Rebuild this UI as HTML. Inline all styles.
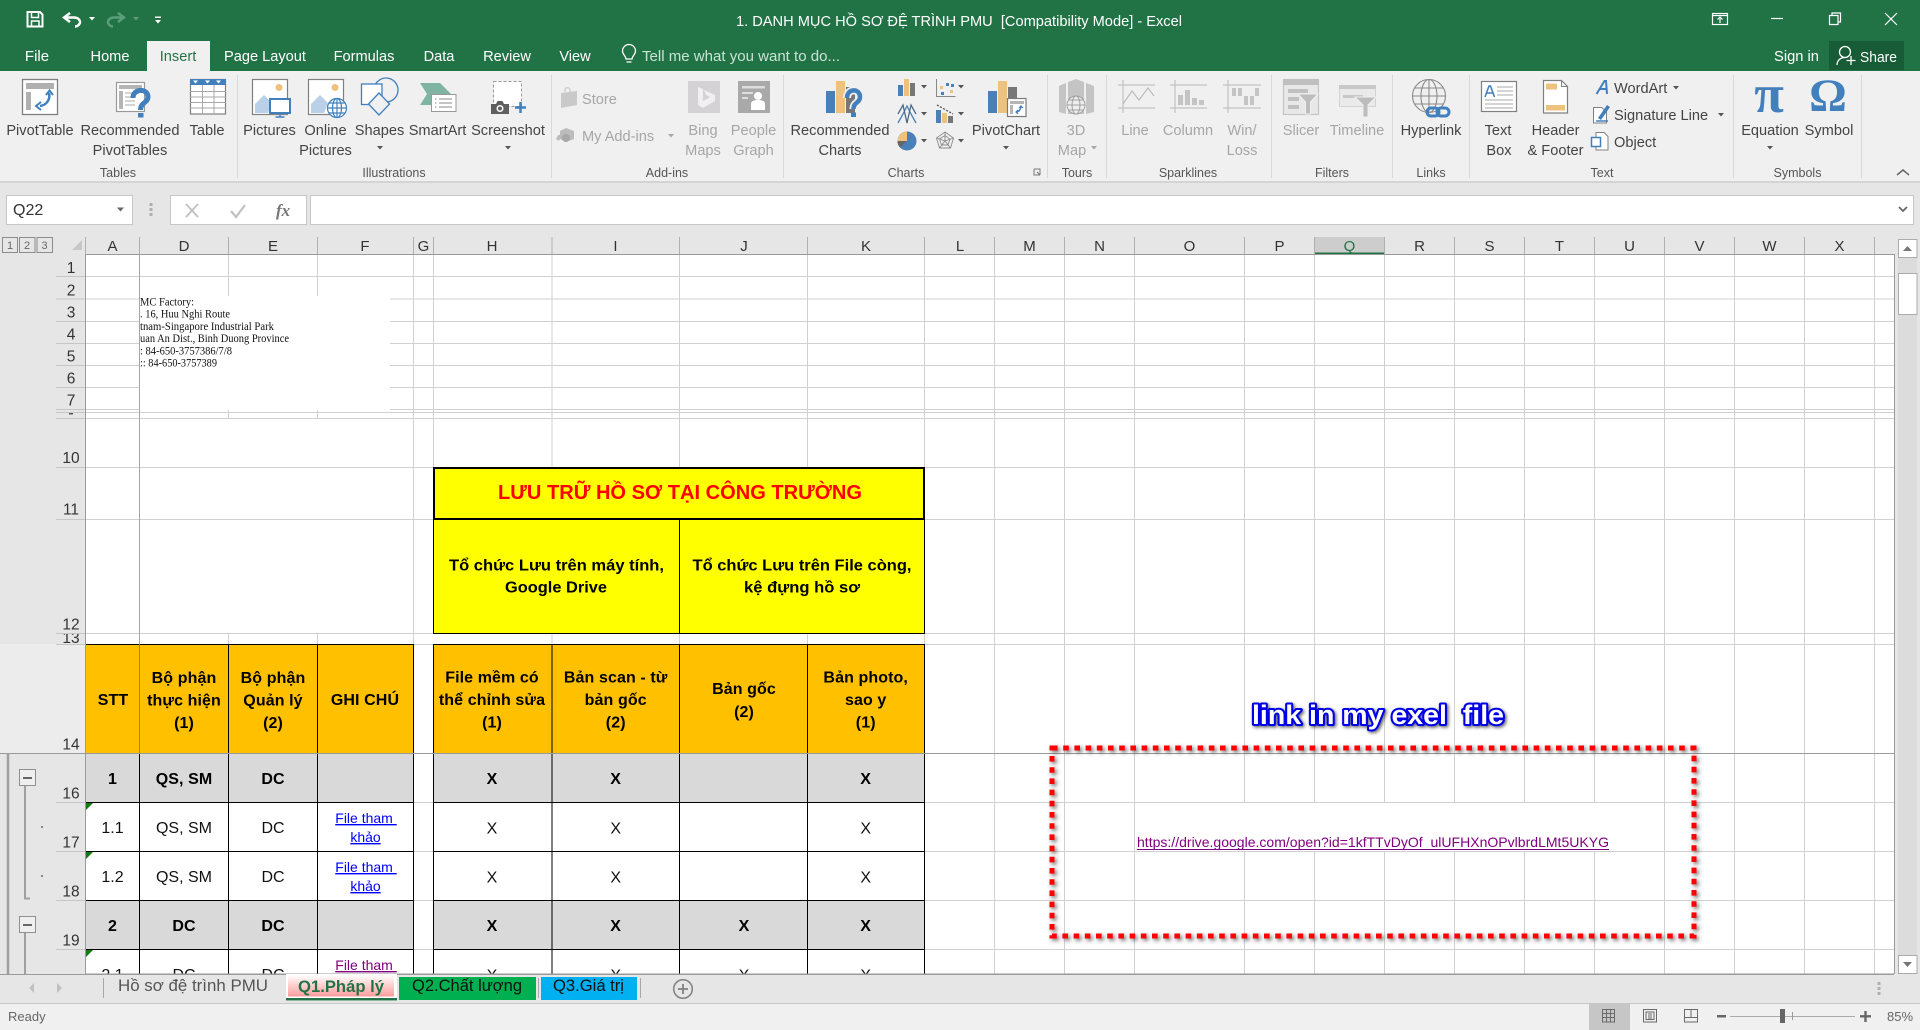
<!DOCTYPE html>
<html lang="vi"><head><meta charset="utf-8"><title>1. DANH MỤC HỒ SƠ ĐỆ TRÌNH PMU - Excel</title>
<style>
html,body{margin:0;padding:0;background:#fff;overflow:hidden}
svg{display:block;font-family:"Liberation Sans","Noto Sans CJK SC",sans-serif}
.tb{font-size:15px;fill:#fff}
.r{font-size:14.6px;fill:#444;text-anchor:middle}
.rl{font-size:14.6px;fill:#444}
.d{font-size:14.6px;fill:#a6a6a6;text-anchor:middle}
.dl{font-size:14.6px;fill:#a6a6a6}
.g{font-size:12.5px;fill:#555;text-anchor:middle}
.c{font-size:15px;fill:#333;text-anchor:middle}
.n{font-size:15.5px;fill:#333;text-anchor:middle}
.h{font-size:16px;font-weight:bold;fill:#000;text-anchor:middle;letter-spacing:.1px}
.t{font-size:16px;fill:#111;text-anchor:middle}
.l{font-size:14px;fill:#0000ff;text-anchor:middle;text-decoration:underline}
.p{font-size:14px;fill:#800080;text-anchor:middle;text-decoration:underline}
.s{font-family:"Liberation Serif",serif;font-size:11.5px;fill:#111}
.gl{stroke:#d0d0d0;stroke-width:1;fill:none}
.bk{stroke:#000;stroke-width:1;fill:none}
.blue{stroke:#4280bd;fill:none}
.gr{stroke:#c2c2c2;fill:none}
</style></head><body>
<svg width="1920" height="1030" viewBox="0 0 1920 1030" xmlns="http://www.w3.org/2000/svg" shape-rendering="auto">
<defs>
<filter id="sh" x="-5%" y="-10%" width="110%" height="120%"><feDropShadow dx="2" dy="2" stdDeviation="2" flood-color="#333" flood-opacity=".75"/></filter>
<filter id="sh2" x="-10%" y="-30%" width="120%" height="160%"><feDropShadow dx="1.5" dy="1.5" stdDeviation="1.6" flood-color="#222" flood-opacity=".7"/></filter>
<linearGradient id="pk" x1="0" y1="0" x2="0" y2="1"><stop offset="0" stop-color="#fff"/><stop offset="1" stop-color="#ff9c9c"/></linearGradient>
<clipPath id="c13"><rect x="56" y="634" width="29" height="10"/></clipPath>
</defs>

<!-- backgrounds -->
<rect width="1920" height="1030" fill="#e6e6e6"/>
<rect width="1920" height="71" fill="#217346"/>
<rect y="71" width="1920" height="111" fill="#f0f0f0"/>
<rect y="181" width="1920" height="2" fill="#d4d4d4"/>
<rect x="147" y="41" width="63" height="31" fill="#f0f0f0"/>
<rect x="1829" y="41" width="75" height="29" fill="#185c37"/>

<!-- quick access -->
<g fill="none" stroke="#fff" stroke-width="2">
<path d="M27.5 12H40l2.5 2.5V26.500H27.500Z"/><path d="M31.500 12v5.500h7V12" stroke-width="1.500"/><path d="M31.500 26.500v-5.500h7.500v5.500" stroke-width="1.500"/>
<path d="M70 13l-6 4.500 6 4.500M65 17.500h9c4 0 6 2.500 6 4.500s-2 4.500-5 4.500" stroke-width="2.400"/>
<path d="M118 13l6 4.500-6 4.500M123 17.500h-9c-4 0-6 2.500-6 4.500s2 4.500 5 4.500" stroke="#5c9e7c" stroke-width="2.400"/>
</g>
<path d="M89 17h6l-3 3.500z" fill="#fff"/><path d="M133 17h6l-3 3.500z" fill="#5c9e7c"/>
<path d="M155 16.500h6v1.500h-6zM155 20h6l-3 3.500z" fill="#fff"/>

<text x="736" y="26" class="tb" style="font-size:14.6px" textLength="446" lengthAdjust="spacingAndGlyphs">1. DANH MỤC HỒ SƠ ĐỆ TRÌNH PMU &#160;[Compatibility Mode] - Excel</text>

<!-- window buttons -->
<g fill="none" stroke="#fff" stroke-width="1.200">
<rect x="1712.500" y="13.500" width="15" height="11"/><path d="M1712.500 15.500h15M1720 23v-6M1717.500 19.500l2.500-2.500 2.500 2.500"/>
<path d="M1771 18.500h12"/>
<path d="M1829.500 15.500h8.500v9h-8.500zM1832 15.500v-2.500h8.500v9h-2.500"/>
<path d="M1885 13l12 12M1897 13l-12 12"/>
</g>

<!-- tabs -->
<g class="tb">
<text x="37" y="61" text-anchor="middle">File</text>
<text x="110" y="61" text-anchor="middle" style="font-size:14.6px">Home</text>
<text x="178" y="61" text-anchor="middle" style="fill:#217346;font-size:14.6px">Insert</text>
<text x="265" y="61" text-anchor="middle" style="font-size:14.6px">Page Layout</text>
<text x="364" y="61" text-anchor="middle" style="font-size:14.6px">Formulas</text>
<text x="439" y="61" text-anchor="middle" style="font-size:14.6px">Data</text>
<text x="507" y="61" text-anchor="middle" style="font-size:14.6px">Review</text>
<text x="575" y="61" text-anchor="middle" style="font-size:14.6px">View</text>
<text x="642" y="61" style="fill:#c9e2d4;font-size:14.400px" textLength="198" lengthAdjust="spacingAndGlyphs">Tell me what you want to do...</text>
<text x="1774" y="61" textLength="45" lengthAdjust="spacingAndGlyphs">Sign in</text>
<text x="1860" y="62" textLength="37" lengthAdjust="spacingAndGlyphs">Share</text>
</g>
<g fill="none" stroke="#fff" stroke-width="1.300">
<path d="M626 59c0-3-3.500-4.500-3.500-8a6.500 6.500 0 0 1 13 0c0 3.500-3.500 5-3.500 8zM626.500 62h5"/>
<circle cx="1845" cy="52" r="5.500"/><path d="M1837 65c0-5 4-7.500 8-7.500"/><path d="M1851 56v9M1846.500 60.500h9"/>
</g>

<!-- ribbon separators -->
<path d="M237.500 75v103M551.500 75v103M783.500 75v103M1047.500 75v103M1106.500 75v103M1271.500 75v103M1392.500 75v103M1469.500 75v103M1733.500 75v103M1861.500 75v103" stroke="#d8d8d8" fill="none"/>

<!-- ribbon labels -->
<text x="40" y="135" class="r">PivotTable</text>
<text x="130" y="135" class="r">Recommended</text><text x="130" y="155" class="r">PivotTables</text>
<text x="207" y="135" class="r">Table</text>
<text x="269.500" y="135" class="r">Pictures</text>
<text x="325.500" y="135" class="r">Online</text><text x="325.500" y="155" class="r">Pictures</text>
<text x="379.500" y="135" class="r">Shapes</text>
<text x="437.500" y="135" class="r">SmartArt</text>
<text x="508" y="135" class="r">Screenshot</text>
<text x="118" y="177" class="g">Tables</text><text x="394" y="177" class="g">Illustrations</text>
<text x="582" y="104" class="dl">Store</text><text x="582" y="141" class="dl">My Add-ins</text>
<text x="703" y="135" class="d">Bing</text><text x="703" y="155" class="d">Maps</text>
<text x="753.500" y="135" class="d">People</text><text x="753.500" y="155" class="d">Graph</text>
<text x="667" y="177" class="g">Add-ins</text>
<text x="840" y="135" class="r">Recommended</text><text x="840" y="155" class="r">Charts</text>
<text x="1006" y="135" class="r">PivotChart</text>
<text x="906" y="177" class="g">Charts</text>
<text x="1076" y="135" class="d">3D</text><text x="1072" y="155" class="d">Map</text>
<text x="1077" y="177" class="g">Tours</text>
<text x="1135" y="135" class="d">Line</text><text x="1188" y="135" class="d">Column</text>
<text x="1242" y="135" class="d">Win/</text><text x="1242" y="155" class="d">Loss</text>
<text x="1188" y="177" class="g">Sparklines</text>
<text x="1301" y="135" class="d">Slicer</text><text x="1357" y="135" class="d">Timeline</text>
<text x="1332" y="177" class="g">Filters</text>
<text x="1431" y="135" class="r">Hyperlink</text><text x="1431" y="177" class="g">Links</text>
<text x="1498" y="135" class="r">Text</text><text x="1499" y="155" class="r">Box</text>
<text x="1555.500" y="135" class="r">Header</text><text x="1555.500" y="155" class="r">&amp; Footer</text>
<text x="1614" y="93" class="rl">WordArt</text><text x="1614" y="120" class="rl">Signature Line</text><text x="1614" y="147" class="rl">Object</text>
<text x="1602" y="177" class="g">Text</text>
<text x="1770" y="135" class="r">Equation</text><text x="1829" y="135" class="r">Symbol</text>
<text x="1797.500" y="177" class="g">Symbols</text>

<!-- dropdown arrows -->
<g fill="#555">
<path d="M377 146h6l-3 3.500zM505 146h6l-3 3.500zM1003 146h6l-3 3.500zM921 85h6l-3 3.500zM958 85h6l-3 3.500zM921 112h6l-3 3.500zM958 112h6l-3 3.500zM921 139h6l-3 3.500zM958 139h6l-3 3.500zM1673 86h6l-3 3.500zM1718 113h6l-3 3.500zM1767 146h6l-3 3.500z"/>
</g>
<path d="M668 134h6l-3 3.500zM1091 146h6l-3 3.500z" fill="#a6a6a6"/>
<path d="M1897 175l6-5 6 5" fill="none" stroke="#666" stroke-width="1.500"/>
<path d="M1034 169h6v6M1037 172l3 3M1034 169v6h6" fill="none" stroke="#777" stroke-width="1"/>

<!-- PivotTable -->
<rect x="22.500" y="79.500" width="35" height="35" fill="#fff" stroke="#808080" stroke-width="1.300"/>
<path d="M26 83h28v6H26zM26 92h5v18h-5z" fill="#b0b0b0"/>
<path d="M49 93c1.500 6-2 12-9 13" class="blue" stroke-width="2.500"/><path d="M46 95l3.500-4.500 3.500 4.500M41 102l-5 4 5 4" class="blue" stroke-width="2"/>
<!-- Recommended PivotTables -->
<rect x="116.500" y="82.500" width="28" height="29" fill="#fff" stroke="#999" stroke-width="1.200"/>
<path d="M119 85h23v4h-23zM119 91h4v18h-4z" fill="#b5b5b5"/><path d="M125 93h14M125 97h10M125 101h10M125 105h10" stroke="#c5c5c5" stroke-width="1.500"/>
<path d="M133 98c0-10 15-10 15-1 0 6-7.500 5-7.500 13" fill="none" stroke="#4280bd" stroke-width="5"/><rect x="138" y="113" width="5.500" height="4.500" fill="#4280bd"/>
<!-- Table -->
<rect x="190.500" y="79.500" width="35" height="34.500" fill="#fff" stroke="#808080" stroke-width="1.200"/>
<rect x="190" y="79" width="36" height="6" fill="#4280bd"/>
<path d="M193 80.500h5l-2.500 3zM205 80.500h5l-2.500 3zM216 80.500h5l-2.500 3z" fill="#fff"/>
<path d="M190 91.500h36M190 97h36M190 102.500h36M190 108h36M202.500 85v29M214 85v29" stroke="#a8a8a8"/>
<!-- Pictures -->
<rect x="252.500" y="79.500" width="35" height="35" fill="#fff" stroke="#808080" stroke-width="1.200"/>
<circle cx="279" cy="87.500" r="3.500" fill="#eec27a"/><path d="M255 113v-9l9-9 8 8-4 10z" fill="#b9d0e8"/>
<rect x="270" y="99" width="20" height="14" fill="#fff" stroke="#4280bd" stroke-width="2"/><path d="M280 113v4M275.500 117h9" stroke="#4280bd" stroke-width="1.500"/>
<!-- Online pictures -->
<rect x="308.500" y="79.500" width="35" height="35" fill="#fff" stroke="#808080" stroke-width="1.200"/>
<circle cx="335" cy="87.500" r="3.500" fill="#eec27a"/><path d="M311 113v-9l9-9 8 8-4 10z" fill="#b9d0e8"/>
<g fill="#fff" stroke="#4280bd" stroke-width="1.200"><circle cx="337" cy="108" r="9.500"/><ellipse cx="337" cy="108" rx="4.500" ry="9.500"/><path d="M327.500 108h19M329 103h16M329 113h16M337 98.500v19"/></g>
<!-- Shapes -->
<g stroke="#4280bd" stroke-width="1.300" fill="#f0f0f0"><circle cx="386" cy="90" r="12"/><rect x="361.500" y="84" width="20.500" height="20.500" fill="#fff"/><path d="M379 93l10.500 11-10.500 11-10.500-11z"/></g>
<!-- SmartArt -->
<path d="M420 83h20l11 11-11 11h-20l7-11z" fill="#7fb4a2"/>
<rect x="431.500" y="94.500" width="24.500" height="17" fill="#fff" stroke="#999"/><path d="M435 99h1.500M439 99h13M435 103h1.500M439 103h13M435 107h1.500M439 107h13" stroke="#888"/>
<!-- Screenshot -->
<rect x="493.500" y="81.500" width="28" height="25" fill="#fff" stroke="#9a9a9a" stroke-dasharray="3 2"/>
<path d="M491 104h5l1.500-3h5l1.500 3h5v10h-18z" fill="#5f5f5f"/><circle cx="500" cy="108.500" r="3.500" fill="#fff"/><circle cx="500" cy="108.500" r="2" fill="#5f5f5f"/>
<path d="M520.500 102v11M515 107.500h11" stroke="#4280bd" stroke-width="2.500"/>
<!-- Store / Add-ins -->
<path d="M561 93l16-2v14l-16 3z" fill="#c9c9c9"/><path d="M565 92v-2c0-3 5-3 5 0v2" stroke="#c9c9c9" fill="none" stroke-width="1.300"/>
<path d="M566 128l8 3v8l-8 3-6-3-1 2-3-2 2-4 2 0v-4z" fill="#bcbcbc"/><circle cx="566" cy="138" r="4" fill="#a8a8a8"/>
<!-- Bing / People -->
<rect x="688" y="81" width="32" height="32" fill="#d4d2d4"/><path d="M698 87l5 2v12l7-4-4-2-2-5 11 5v6l-12 7-5-3z" fill="#f0f0f0"/>
<rect x="738" y="81" width="32" height="32" fill="#a9a9a9"/><path d="M742 86h23v2.500h-23zM742 92h11v2h-11zM742 97h6v2h-6z" fill="#ddd"/><circle cx="758" cy="96" r="4" fill="#fff"/><path d="M751 110v-6c0-3 3-4 7-4s7 1 7 4v6z" fill="#fff"/>
<!-- Recommended Charts -->
<rect x="826" y="91" width="9" height="22" fill="#4a80b8"/><rect x="836" y="81" width="9" height="32" fill="#edc27f"/><rect x="846" y="87" width="9" height="26" fill="#777"/>
<path d="M847 98c0-10 13-10 13-1 0 6-6.500 5-6.500 12" fill="none" stroke="#f0f0f0" stroke-width="8"/>
<path d="M847 98c0-10 13-10 13-1 0 6-6.500 5-6.500 12" fill="none" stroke="#4280bd" stroke-width="4.500"/><rect x="851" y="112.500" width="5" height="4.500" fill="#4280bd"/>
<!-- small charts -->
<rect x="898" y="85" width="5" height="11" fill="#4a80b8"/><rect x="904" y="79" width="5" height="17" fill="#edc27f"/><rect x="910" y="83" width="5" height="13" fill="#777"/>
<path d="M936.500 79v17.500h19" stroke="#888" fill="none"/><path d="M940 86h3v3h-3zM950 90h3v3h-3z" fill="#edc27f"/><path d="M946 83h3v3h-3zM941 92h3v3h-3zM951 84h3v3h-3z" fill="#4a80b8"/>
<path d="M898 114l5-9 4 18 4-18 5 9M898 123l5-9 4-8 4 8 5 9" fill="none" stroke="#4a80b8" stroke-width="1.300"/><path d="M898 114l5-9 4 18 4-18 5 9" fill="none" stroke="#555" stroke-width=".6"/>
<rect x="936" y="110" width="5" height="13" fill="#4a80b8"/><rect x="942" y="113" width="5" height="10" fill="#edc27f"/><rect x="948" y="116" width="5" height="7" fill="#777"/><path d="M937 105l16 9" stroke="#555" stroke-width="1.300" stroke-dasharray="2 1.500"/>
<circle cx="907" cy="141" r="9.500" fill="#4a80b8"/><path d="M907 141v-9.500a9.500 9.500 0 0 0-9.500 9.500z" fill="#edc27f"/><path d="M907 141h-9.500a9.500 9.500 0 0 0 2.500 6.500z" fill="#666"/>
<g fill="none" stroke="#8a8a8a" stroke-width=".9"><path d="M945 132l8.500 6-3 10h-11l-3-10zM945 135.500l5 3.500-2 6h-6.500l-2-6zM945 132v9M936.500 138l8.500 3 8.500-3M939.500 148l5.500-7 5.500 7"/></g>
<!-- PivotChart -->
<rect x="988" y="91" width="9" height="22" fill="#4a80b8"/><rect x="998" y="81" width="9" height="32" fill="#edc27f"/><rect x="1008" y="87" width="9" height="12" fill="#777"/>
<rect x="1007.500" y="98.500" width="18.500" height="18" fill="#fff" stroke="#7a7a7a" stroke-width="1.200"/><path d="M1010 101h14v3h-14zM1010 105h3v9h-3z" fill="#b5b5b5"/><path d="M1021 106c0 3-2 6-5 6" class="blue" stroke-width="1.500"/><path d="M1019 108l2-2 2 2M1018 110l-2 2 2 2" class="blue" stroke-width="1.200"/>
<!-- 3D map -->
<path d="M1059 86l7-3v31l-7-2zM1068 82l8-3 8 3v32h-16zM1086 83l8 3v26l-8 2z" fill="#c4c4c4"/>
<g fill="#eee" stroke="#a0a0a0" stroke-width="1"><circle cx="1076" cy="105" r="9"/><ellipse cx="1076" cy="105" rx="4" ry="9"/><path d="M1067 105h18M1068.500 100h15M1068.500 110h15"/></g>
<!-- Sparklines -->
<g class="gr" stroke-width="1.200"><path d="M1118 85h37M1118 108h37M1123 80v33"/><path d="M1123 104l9-13 7 9 9-12 6 8" stroke="#bbb"/>
<path d="M1170 85h37M1170 108h37M1175 80v33"/><path d="M1223 85h38M1223 108h38M1228 80v33"/></g>
<path d="M1178 95h5v10h-5zM1185 90h5v15h-5zM1192 98h5v7h-5zM1199 100h5v5h-5z" fill="#c4c4c4"/>
<path d="M1232 88h4v8h-4zM1238 88h4v8h-4zM1244 96h4v9h-4zM1250 96h4v9h-4zM1255 88h4v8h-4z" fill="#c4c4c4"/>
<!-- Slicer / Timeline -->
<rect x="1283.500" y="79.500" width="35" height="35" fill="#e8e8e8" stroke="#c4c4c4" stroke-width="1.200"/><path d="M1283 79h36v6h-36zM1288 89h20v4h-20zM1288 97h11v4h-11zM1288 105h11v4h-11z" fill="#c0c0c0"/>
<path d="M1298 94h20l-7.500 8v12h-5v-12z" fill="#bdbdbd" stroke="#f0f0f0"/>
<rect x="1339.500" y="85.500" width="36" height="21" fill="#eaeaea" stroke="#d2d2d2"/><path d="M1339 85h37v4h-37zM1343 95h20v3h-20z" fill="#c8c8c8"/>
<path d="M1355 97h21l-8 8v12h-5v-12z" fill="#bdbdbd" stroke="#f0f0f0"/>
<!-- Hyperlink -->
<g fill="none" stroke="#8a8a8a" stroke-width="1.100"><circle cx="1429" cy="96" r="16.500"/><ellipse cx="1429" cy="96" rx="8" ry="16.500"/><path d="M1412.500 96h33M1415 88h28M1415 104h28M1429 79.500v33"/></g>
<g fill="none" stroke="#4280bd" stroke-width="3"><rect x="1427" y="108" width="12" height="8" rx="4"/><rect x="1437" y="108" width="12" height="8" rx="4"/></g>
<!-- Text box -->
<rect x="1481.500" y="81.500" width="35" height="30" fill="#fff" stroke="#808080" stroke-width="1.200"/>
<path d="M1485 97l4-11h1.500l4 11M1486.500 93h6.500" fill="none" stroke="#4280bd" stroke-width="1.600"/>
<path d="M1497 87h16M1497 91h16M1497 95h16M1485 100h28M1485 104h28M1485 108h28" stroke="#a8a8a8"/>
<!-- Header footer -->
<path d="M1543.500 80.500h18l6 6v26.500h-24z" fill="#fff" stroke="#808080" stroke-width="1.200"/><path d="M1561.500 80.500v6h6" fill="none" stroke="#808080"/>
<path d="M1546 83.500h11v6h-11zM1546 105h19v5.500h-19z" fill="#edc27f"/>
<!-- WordArt etc -->
<path d="M1596.500 94l8-13h1.500l1 13M1600 89h7" fill="none" stroke="#4280bd" stroke-width="2"/>
<path d="M1593.500 107.500h8l5 4v11.500h-13z" fill="#fff" stroke="#808080"/><path d="M1598 118l9-13 3 2-9 13z" fill="#4280bd"/><path d="M1596 121h12" stroke="#4280bd" stroke-width="1.500"/>
<path d="M1596 132.500h8l4 4v13.500h-12z" fill="#fff" stroke="#808080"/><rect x="1591.500" y="137.500" width="9" height="9" fill="#fff" stroke="#4280bd" stroke-width="1.500"/>
<!-- symbols -->
<text x="1769" y="112" font-family="Liberation Serif" font-size="54" font-weight="bold" fill="#4280bd" text-anchor="middle">π</text>
<text x="1828" y="111" font-family="Liberation Serif" font-size="47" font-weight="bold" fill="#4280bd" text-anchor="middle">Ω</text>

<!-- formula bar -->
<rect x="6.500" y="195.500" width="126" height="29" fill="#fff" stroke="#c6c6c6"/>
<text x="13" y="215" style="font-size:16px;fill:#333">Q22</text>
<path d="M117 207.500h7l-3.500 4z" fill="#666"/>
<path d="M149.500 203h3v3h-3zM149.500 208h3v3h-3zM149.500 213h3v3h-3z" fill="#b0b0b0"/>
<rect x="170.500" y="195.500" width="136" height="29" fill="#fff" stroke="#c6c6c6"/>
<path d="M186 204l12 13M198 204l-12 13" stroke="#c0c0c0" stroke-width="1.800" fill="none"/>
<path d="M231 211l5 6 9-12" stroke="#c0c0c0" stroke-width="2.200" fill="none"/>
<text x="276" y="216" font-family="Liberation Serif" font-size="17" font-style="italic" fill="#777" style="font-weight:bold">fx</text>
<rect x="310.500" y="195.500" width="1603" height="29" fill="#fff" stroke="#c6c6c6"/>
<path d="M1899 207l4 4 4-4" stroke="#666" stroke-width="1.800" fill="none"/>

<!-- outline level buttons -->
<g fill="#e6e6e6" stroke="#8c8c8c"><rect x="2.500" y="237.500" width="15" height="15"/><rect x="19.500" y="237.500" width="15.500" height="15"/><rect x="37" y="237.500" width="15.500" height="15"/></g>
<g style="font-size:11px;fill:#666;text-anchor:middle"><text x="10" y="249">1</text><text x="27" y="249">2</text><text x="44.500" y="249">3</text></g>

<!-- column header -->
<rect x="1314" y="237" width="70.500" height="17" fill="#cdcdcd"/>
<rect x="1314" y="252.500" width="70.500" height="2" fill="#217346"/>
<path d="M82 240v10H72z" fill="#c8c8c8"/>
<path d="M85.500 237v17M139.500 237v17M228.500 237v17M317.500 237v17M413.500 237v17M433.500 237v17M552 237v17M679.500 237v17M807.500 237v17M924.500 237v17M994.500 237v17M1064.500 237v17M1134.500 237v17M1244.500 237v17M1314.500 237v17M1384.500 237v17M1454.500 237v17M1524.500 237v17M1594.500 237v17M1664.500 237v17M1734.500 237v17M1804.500 237v17M1874.500 237v17" stroke="#b0b0b0" fill="none"/>
<g class="c">
<text x="112.500" y="251">A</text><text x="184" y="251">D</text><text x="273" y="251">E</text><text x="365" y="251">F</text><text x="423.500" y="251">G</text><text x="492" y="251">H</text><text x="615.500" y="251">I</text><text x="744" y="251">J</text><text x="866" y="251">K</text><text x="960" y="251">L</text><text x="1029.500" y="251">M</text><text x="1099.500" y="251">N</text><text x="1189.500" y="251">O</text><text x="1279.500" y="251">P</text><text x="1349.500" y="251" style="fill:#217346">Q</text><text x="1419.500" y="251">R</text><text x="1489.500" y="251">S</text><text x="1559.500" y="251">T</text><text x="1629.500" y="251">U</text><text x="1699.500" y="251">V</text><text x="1769.500" y="251">W</text><text x="1839.500" y="251">X</text>
</g>

<!-- sheet -->
<rect x="86" y="254" width="1808" height="720" fill="#fff"/>
<path class="gl" d="M86 276.500H1894M86 299H1894M86 321.500H1894M86 343.500H1894M86 365.500H1894M86 387.500H1894M86 409.500H1894M86 412.500H1894M86 418.500H1894M86 467.500H1894M86 519.500H1894M86 633.500H1894M86 644.500H1894M86 802.500H1894M86 851.500H1894M86 900.500H1894M86 949.500H1894"/>
<path class="gl" d="M228.500 254V418M317.500 254V418M228.500 633V644M317.500 633V644M413.500 254V974M433.500 254V467M552 254V467M679.500 254V467M807.500 254V467M552 633V644M679.500 633V644M807.500 633V644M924.500 254V753M994.500 254V974M1064.500 254V974M1134.500 254V974M1244.500 254V802M1314.500 254V802M1384.500 254V802M1454.500 254V802M1524.500 254V802M1594.500 254V802M1244.500 851V974M1314.500 851V974M1384.500 851V974M1454.500 851V974M1524.500 851V974M1594.500 851V974M1664.500 254V974M1734.500 254V974M1804.500 254V974M1874.500 254V974"/>
<path d="M139.500 254V644" stroke="#a6a6a6" fill="none"/>

<!-- image with address -->
<rect x="140" y="296" width="250" height="114" fill="#fff"/>
<text class="s" x="140" y="305.700" textLength="54" lengthAdjust="spacingAndGlyphs">MC Factory:</text>
<text class="s" x="140" y="317.700" textLength="90" lengthAdjust="spacingAndGlyphs">. 16, Huu Nghi Route</text>
<text class="s" x="140" y="330" textLength="134" lengthAdjust="spacingAndGlyphs">tnam-Singapore Industrial Park</text>
<text class="s" x="140" y="342" textLength="149" lengthAdjust="spacingAndGlyphs">uan An Dist., Binh Duong Province</text>
<text class="s" x="140" y="354.700" textLength="92" lengthAdjust="spacingAndGlyphs">: 84-650-3757386/7/8</text>
<text class="s" x="140" y="366.700" textLength="77" lengthAdjust="spacingAndGlyphs">:: 84-650-3757389</text>

<!-- yellow block -->
<rect x="433.500" y="467.500" width="491" height="166" fill="#ffff00"/>
<rect x="434" y="468" width="490" height="51" fill="none" stroke="#000" stroke-width="2"/>
<path class="bk" d="M433.500 519V633.500H924.500V519M679.500 520V633.500"/>
<text x="680" y="499" style="font-size:20px;font-weight:bold;fill:#ff0000;text-anchor:middle" textLength="364" lengthAdjust="spacingAndGlyphs">LƯU TRỮ HỒ SƠ TẠI CÔNG TRƯỜNG</text>
<text class="h" x="556.500" y="570.700" textLength="215" lengthAdjust="spacingAndGlyphs" style="letter-spacing:0">Tổ chức Lưu trên máy tính,</text>
<text class="h" x="556" y="592.700" textLength="102" lengthAdjust="spacingAndGlyphs" style="letter-spacing:0">Google Drive</text>
<text class="h" x="802" y="570.700" textLength="219" lengthAdjust="spacingAndGlyphs" style="letter-spacing:0">Tổ chức Lưu trên File còng,</text>
<text class="h" x="802" y="592.700" textLength="116" lengthAdjust="spacingAndGlyphs" style="letter-spacing:0">kệ đựng hồ sơ</text>

<!-- orange header -->
<rect x="86" y="644.500" width="327.500" height="108.500" fill="#ffc000"/>
<rect x="433.500" y="644.500" width="491" height="108.500" fill="#ffc000"/>
<path class="bk" d="M86 644.500H413.500M433.500 644.500H924.500M228.500 644V753M317.500 644V753M413.500 644V753M433.500 644V753M552 644V753M679.500 644V753M807.500 644V753M924.500 644V753"/>
<path d="M139.500 644V753" stroke="#7f7f7f" fill="none"/>
<text class="h" x="113" y="705">STT</text>
<text class="h" x="184" y="683">Bộ phận</text><text class="h" x="184" y="705.500">thực hiện</text><text class="h" x="184" y="728">(1)</text>
<text class="h" x="273" y="683">Bộ phận</text><text class="h" x="273" y="705.500">Quản lý</text><text class="h" x="273" y="728">(2)</text>
<text class="h" x="365" y="705">GHI CHÚ</text>
<text class="h" x="492" y="682.700">File mềm có</text><text class="h" x="492" y="705">thể chỉnh sửa</text><text class="h" x="492" y="727.500">(1)</text>
<text class="h" x="615.700" y="682.700">Bản scan - từ</text><text class="h" x="615.700" y="705">bản gốc</text><text class="h" x="615.700" y="727.500">(2)</text>
<text class="h" x="744" y="694">Bản gốc</text><text class="h" x="744" y="717">(2)</text>
<text class="h" x="865.700" y="682.700">Bản photo,</text><text class="h" x="865.700" y="705">sao y</text><text class="h" x="865.700" y="727.500">(1)</text>

<!-- data rows -->
<path d="M86 753h327.500v49H86zM433.500 753h491v49h-491zM86 900.500h327.500v49H86zM433.500 900.500h491v49h-491z" fill="#d9d9d9"/>
<path class="bk" d="M86 802.500H413.500M433.500 802.500H924.500M86 851.500H413.500M433.500 851.500H924.500M86 900.500H413.500M433.500 900.500H924.500M86 949.500H413.500M433.500 949.500H924.500M139.500 753V974M228.500 753V974M317.500 753V974M413.500 753V974M433.500 753V974M552 753V974M679.500 753V974M807.500 753V974M924.500 753V974"/>
<path d="M0 753.500H1894" stroke="#9a9a9a" fill="none"/>
<path d="M86 803h7l-7 7zM86 852h7l-7 7zM86 950h7l-7 7z" fill="#107c10"/>

<text class="h" x="112.500" y="784">1</text><text class="h" x="184" y="784">QS, SM</text><text class="h" x="273" y="784">DC</text>
<text class="h" x="492" y="784">X</text><text class="h" x="615.700" y="784">X</text><text class="h" x="865.700" y="784">X</text>
<text class="t" x="112.500" y="833">1.1</text><text class="t" x="184" y="833">QS, SM</text><text class="t" x="273" y="833">DC</text>
<text class="l" x="366" y="823">File tham&#160;</text><text class="l" x="365.500" y="842">khảo</text>
<text class="t" x="492" y="833.500">X</text><text class="t" x="615.700" y="833.500">X</text><text class="t" x="865.700" y="833.500">X</text>
<text class="t" x="112.500" y="882">1.2</text><text class="t" x="184" y="882">QS, SM</text><text class="t" x="273" y="882">DC</text>
<text class="l" x="366" y="872">File tham&#160;</text><text class="l" x="365.500" y="891">khảo</text>
<text class="t" x="492" y="882.500">X</text><text class="t" x="615.700" y="882.500">X</text><text class="t" x="865.700" y="882.500">X</text>
<text class="h" x="112.500" y="931">2</text><text class="h" x="184" y="931">DC</text><text class="h" x="273" y="931">DC</text>
<text class="h" x="492" y="931">X</text><text class="h" x="615.700" y="931">X</text><text class="h" x="744" y="931">X</text><text class="h" x="865.700" y="931">X</text>
<text class="t" x="112.500" y="980">2.1</text><text class="t" x="184" y="980">DC</text><text class="t" x="273" y="980">DC</text>
<text class="p" x="366" y="970">File tham&#160;</text>
<text class="t" x="492" y="980.500">X</text><text class="t" x="615.700" y="980.500">X</text><text class="t" x="744" y="980.500">X</text><text class="t" x="865.700" y="980.500">X</text>

<!-- annotations -->
<rect x="1052" y="748" width="642" height="188" fill="none" stroke="#ff0000" stroke-width="5" stroke-dasharray="5.600 5.600" filter="url(#sh)"/>
<text x="1252" y="724" filter="url(#sh2)" style="font-size:27px;font-weight:bold;fill:#fff;stroke:#0000e6;stroke-width:4px;paint-order:stroke;stroke-linejoin:round" textLength="252" lengthAdjust="spacingAndGlyphs">link in my exel&#160; file</text>
<text x="1137" y="847" style="font-size:14px;fill:#800080" textLength="472" lengthAdjust="spacingAndGlyphs">https://drive.google.com/open?id=1kfTTvDyOf_ulUFHXnOPvlbrdLMt5UKYG</text>
<path d="M1137 849.500H1609" stroke="#800080" stroke-width="1"/>

<!-- row headers -->
<rect x="0" y="254" width="85" height="720" fill="#e6e6e6"/>
<rect x="0" y="644" width="85" height="109" fill="#ececec"/>
<path d="M56 276.500H85M56 299H85M56 321.500H85M56 343.500H85M56 365.500H85M56 387.500H85M56 409.500H85M56 412.500H85M56 418.500H85M56 467.500H85M56 519.500H85M56 633.500H85M56 644.500H85M56 802.500H85M56 851.500H85M56 900.500H85M56 949.500H85" stroke="#c6c6c6" fill="none"/>
<path d="M0 753.500H85" stroke="#9a9a9a"/>
<path d="M85.500 254V974M85 254.500H1894M85 974H1894M1894.500 254V974" stroke="#9a9a9a" fill="none"/>
<g class="n">
<text x="71" y="273">1</text><text x="71" y="295.500">2</text><text x="71" y="317.500">3</text><text x="71" y="339.500">4</text><text x="71" y="361.500">5</text><text x="71" y="383.500">6</text><text x="71" y="405.500">7</text>
<text x="71" y="463">10</text><text x="71" y="514.500">11</text><text x="71" y="629.500">12</text>
<text x="71" y="643" clip-path="url(#c13)">13</text>
<text x="71" y="749.500">14</text><text x="71" y="798.500">16</text><text x="71" y="847.500">17</text><text x="71" y="896.500">18</text><text x="71" y="945.500">19</text>
</g>
<rect x="69" y="413" width="4" height="1.500" fill="#555"/>
<!-- outline -->
<path d="M8 753v221" stroke="#a0a0a0" stroke-width="2.500" fill="none"/>
<path d="M25 786V898.500h5M25 933V974" stroke="#a0a0a0" stroke-width="2" fill="none"/>
<rect x="19.500" y="769.500" width="16" height="16" fill="#efefef" stroke="#909090"/><rect x="23" y="777" width="9" height="2" fill="#666"/>
<rect x="19.500" y="916.500" width="16" height="16" fill="#efefef" stroke="#909090"/><rect x="23" y="924" width="9" height="2" fill="#666"/>
<rect x="41" y="826" width="2" height="2" fill="#888"/><rect x="41" y="875" width="2" height="2" fill="#888"/>

<!-- vertical scrollbar -->
<rect x="1895" y="237" width="25" height="737" fill="#e6e6e6"/>
<rect x="1898" y="257" width="19" height="699" fill="#dcdcdc"/>
<rect x="1898.500" y="239.500" width="18.500" height="18" fill="#fff" stroke="#ababab"/><path d="M1903 251l4.500-5 4.500 5z" fill="#777"/>
<rect x="1898.500" y="273.500" width="18.500" height="41" fill="#fff" stroke="#ababab"/>
<rect x="1898.500" y="955.500" width="18.500" height="18" fill="#fff" stroke="#ababab"/><path d="M1903 962l4.500 5 4.500-5z" fill="#777"/>

<!-- tab bar -->
<rect x="0" y="975" width="1920" height="28" fill="#e6e6e6"/>
<path d="M0 974.500H1894" stroke="#9a9a9a"/>
<path d="M34 983v10l-5-5zM57 983v10l5-5z" fill="#c0c0c0"/>
<path d="M103.500 978v20M538.500 978v20M640.500 978v20" stroke="#a8a8a8" fill="none"/>
<text x="118" y="991" style="font-size:17px;fill:#555" textLength="150" lengthAdjust="spacingAndGlyphs">Hồ sơ đệ trình PMU</text>
<rect x="286" y="974" width="111" height="27" fill="#fff"/>
<rect x="288" y="975" width="106" height="21.500" fill="url(#pk)"/>
<rect x="286" y="998" width="111" height="2.500" fill="#217346"/>
<text x="298" y="992" style="font-size:17px;font-weight:bold;fill:#217346" textLength="86" lengthAdjust="spacingAndGlyphs">Q1.Pháp lý</text>
<rect x="399" y="977" width="137" height="23" fill="#00b050"/>
<text x="412" y="991" style="font-size:17px;fill:#111" textLength="110" lengthAdjust="spacingAndGlyphs">Q2.Chất lượng</text>
<rect x="541" y="977" width="96" height="23" fill="#00b0f0"/>
<text x="553" y="991" style="font-size:17px;fill:#111" textLength="71" lengthAdjust="spacingAndGlyphs">Q3.Giá trị</text>
<circle cx="683" cy="989" r="9.300" fill="none" stroke="#808080" stroke-width="1.500"/><path d="M683 984v10M678 989h10" stroke="#808080" stroke-width="1.800"/>
<path d="M1877.500 982h3v3h-3zM1877.500 987h3v3h-3zM1877.500 992h3v3h-3z" fill="#b0b0b0"/>

<!-- status bar -->
<rect x="0" y="1003" width="1920" height="27" fill="#f0f0f0"/>
<path d="M0 1003.500H1920" stroke="#c8c8c8"/>
<text x="8" y="1021" style="font-size:13px;fill:#666">Ready</text>
<rect x="1589" y="1004" width="41" height="26" fill="#c6c6c6"/>
<path d="M1602.500 1009.500h12v12.500h-12zM1606.500 1009.500v12.500M1610.500 1009.500v12.500M1602.500 1013.500h12M1602.500 1017.500h12" fill="none" stroke="#6a6a6a"/>
<path d="M1643.500 1009.500h13v12.500h-13zM1646 1012h8v7.500h-8zM1648 1014h4M1648 1016h4M1648 1018h4" fill="none" stroke="#6a6a6a"/>
<path d="M1684.500 1009.500h13v12.500h-13zM1684.500 1017.500h13M1691 1009.500v8" fill="none" stroke="#6a6a6a"/>
<rect x="1717" y="1015" width="9" height="2.500" fill="#666"/>
<rect x="1730" y="1016" width="125" height="1" fill="#aaa"/>
<rect x="1792" y="1012" width="1" height="8" fill="#999"/>
<rect x="1780" y="1009" width="5" height="14" fill="#666"/>
<path d="M1860 1016.300h11M1865.500 1011v11" stroke="#666" stroke-width="2.400"/>
<text x="1887" y="1021" style="font-size:13px;fill:#666">85%</text>
</svg>
</body></html>
